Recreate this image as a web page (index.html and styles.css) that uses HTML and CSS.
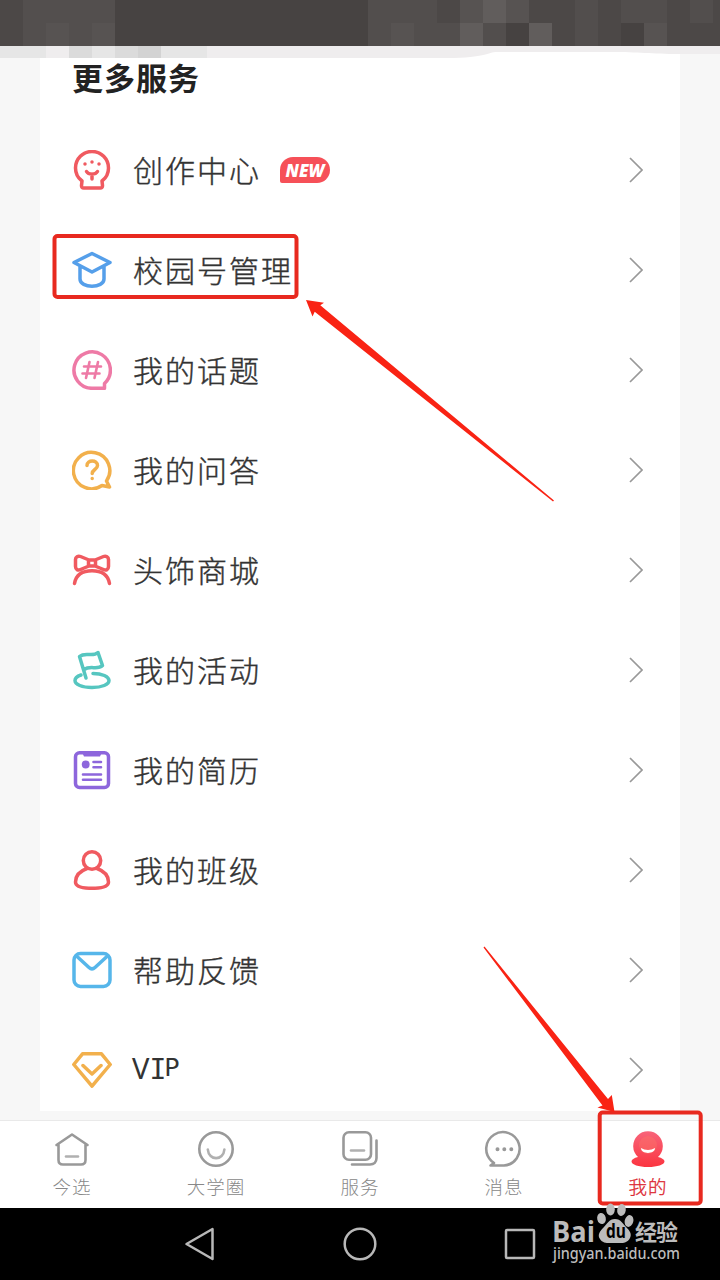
FILE: index.html
```
<!DOCTYPE html>
<html lang="zh-CN">
<head>
    <meta charset="UTF-8">
    <meta name="viewport" content="width=device-width, initial-scale=1.0">
    <title>我的</title>
    <link rel="stylesheet" href="styles.css">
</head>
<body>
    <div class="screen">
        <svg class="mosaic" viewBox="0 0 720 58">
            <path fill="#4c4847" d="M0 0h720v46H0z"/>
            <path fill="#534f4e" d="M23 0h92v46H23z"/>
            <path fill="#575352" d="M46 23h23v23H46zM92 23h23v23H92z"/>
            <path fill="#474342" d="M115 0h253v46H115z"/>
            <path fill="#524e4d" d="M368 0h69v23h-69zM368 23h92v23h-92zM483 23h23v23h-23zM575 0h23v46h-23zM621 0h46v23h-46zM690 0h23v23h-23z"/>
            <path fill="#575352" d="M391 23h23v23h-23zM460 0h23v23h-23zM506 0h23v23h-23zM644 23h23v23h-23z"/>
            <path fill="#615d5c" d="M483 0h23v23h-23zM460 23h23v23h-23zM529 23h23v23h-23z"/>
            <path fill="#464241" d="M506 23h23v23h-23zM621 23h23v23h-23z"/>
            <path fill="#fff" d="M40 46h640v12H40z"/>
            <path fill="#efedee" d="M0 46h720v8h-40c-30 0-40-2-70-2H497c-10 0-10 6-50 6H0z"/>
            <path fill="#e6e6e6" d="M0 46h46v12H0zM92 46h23v12H92zM161 46h46v12h-46z"/>
            <path fill="#dbdbdb" d="M69 46h23v12H69zM115 46h23v12h-23z"/>
            <path fill="#d3d3d3" d="M138 46h23v12h-23z"/>
        </svg>

        <div class="card">
            <h1>更多服务</h1>
            <div class="row red">
                <svg class="icon" viewBox="0 0 40 40"><path d="M10 31C6 28 3.500 23.500 3.500 18a16.500 16.500 0 0 1 33 0c0 5.500-2.500 10-6.500 13l.5 4.500c.1 1.500-.7 2.500-2.200 2.500H11.700c-1.500 0-2.300-1-2.200-2.500z"/><path d="M14.500 21.500c2 3.500 9 3.500 11 0M20 24v5"/><path d="M13 14v.1M20 12v.1M27 14v.1"/></svg>
                <span class="label">创作中心</span>
                <span class="badge">NEW</span>
                <svg class="arrow" viewBox="0 0 14 26"><path d="M1 1l12 12L1 25"/></svg>
            </div>
            <div class="row blue">
                <svg class="icon" viewBox="0 0 40 40"><path d="M2 12.500L20 3.500l18 9-18 9.500zM8 16v13c0 9.500 24 9.500 24 0V16"/></svg>
                <span class="label">校园号管理</span>
                <svg class="arrow" viewBox="0 0 14 26"><path d="M1 1l12 12L1 25"/></svg>
            </div>
            <div class="row pink">
                <svg class="icon" viewBox="0 0 40 40"><path d="M32.500 34v4.300H20A18.200 18.200 0 1 1 32.500 33.500z"/><path class="thin" d="M17.500 12l-3.500 16M26 12l-3.500 16M12 16.500h17M10.500 23.500h17"/></svg>
                <span class="label">我的话题</span>
                <svg class="arrow" viewBox="0 0 14 26"><path d="M1 1l12 12L1 25"/></svg>
            </div>
            <div class="row orange">
                <svg class="icon" viewBox="0 0 40 40"><path d="M34.500 31l3 6-7.500-1.500A18.200 18.200 0 1 1 34.500 31z"/><path d="M15 15.500c0-6 10.500-6 10.500 0 0 4-5.300 4-5.300 8M20.200 28.500v.1"/></svg>
                <span class="label">我的问答</span>
                <svg class="arrow" viewBox="0 0 14 26"><path d="M1 1l12 12L1 25"/></svg>
            </div>
            <div class="row red">
                <svg class="icon" viewBox="0 0 40 40"><path d="M17 10L8.500 6.500C6 5.500 3.500 7 3.500 9.500v7c0 3 2.500 4.300 5 3L17 16M23 10l8.500-3.500c2.500-1 5 .5 5 3v7c0 3-2.500 4.300-5 3L23 16M16.500 10h7v6h-7zM2.500 33.500C4 25 10 20.800 20 20.800S36 25 37.500 33.500"/></svg>
                <span class="label">头饰商城</span>
                <svg class="arrow" viewBox="0 0 14 26"><path d="M1 1l12 12L1 25"/></svg>
            </div>
            <div class="row teal">
                <svg class="icon" viewBox="0 0 40 40"><path d="M14 28L7.500 6.500c6-5 13 1 18.500-4l4.500 13c-5 5-12-.5-18.500 4M21 23.500c9 0 16 3 16 7s-7 7-17 7-17-3-17-7c0-2.500 2-4.200 6-5.500"/></svg>
                <span class="label">我的活动</span>
                <svg class="arrow" viewBox="0 0 14 26"><path d="M1 1l12 12L1 25"/></svg>
            </div>
            <div class="row purple">
                <svg class="icon" viewBox="0 0 40 40"><rect x="3.500" y="2.700" width="33" height="34.800" rx="4"/><path class="fill" d="M10 2h20l-2 4.500H12z"/><circle class="fill" cx="13.700" cy="14.500" r="3.900"/><path class="thin" d="M21.500 12h7.500M21.500 17.300h7.500M11 24.500h18M11 29.800h18"/></svg>
                <span class="label">我的简历</span>
                <svg class="arrow" viewBox="0 0 14 26"><path d="M1 1l12 12L1 25"/></svg>
            </div>
            <div class="row red">
                <svg class="icon" viewBox="0 0 40 40"><circle cx="20" cy="10.500" r="8.700"/><path d="M15 18.500C8 21 3.500 26 3.500 32c0 4 5 6.300 16.500 6.300S36.500 36 36.500 32c0-6-4.500-11-11.500-13.500"/></svg>
                <span class="label">我的班级</span>
                <svg class="arrow" viewBox="0 0 14 26"><path d="M1 1l12 12L1 25"/></svg>
            </div>
            <div class="row sky">
                <svg class="icon" viewBox="0 0 40 40"><rect x="2" y="3.500" width="36" height="33" rx="6.500"/><path d="M4.500 6l12.500 11.500c2 1.800 4 1.800 6 0L35.500 6"/></svg>
                <span class="label">帮助反馈</span>
                <svg class="arrow" viewBox="0 0 14 26"><path d="M1 1l12 12L1 25"/></svg>
            </div>
            <div class="row orange">
                <svg class="icon" viewBox="0 0 40 40"><path d="M10.500 3.800h19l8.700 10.700L20 36.200 1.800 14.500zM11 15.500l9 8.500 9-8.500"/></svg>
                <span class="label vip">V<span class="vip-i">I</span><span class="vip-p">P</span></span>
                <svg class="arrow" viewBox="0 0 14 26"><path d="M1 1l12 12L1 25"/></svg>
            </div>
        </div>

        <div class="tabs">
            <div class="tab">
                <svg viewBox="0 0 40 40"><path d="M4.500 16L20 5.500 35.500 16M6.500 15.500V31c0 3 1.500 4.500 4.500 4.500h18c3 0 4.500-1.500 4.500-4.500V15.500"/><path class="light" d="M14 27.500h12"/></svg>
                <span>今选</span>
            </div>
            <div class="tab">
                <svg viewBox="0 0 40 40"><circle cx="20" cy="20" r="16.700"/><path class="light" d="M11.800 20.500c1 11.500 15.600 11.500 16.600 0"/></svg>
                <span>大学圈</span>
            </div>
            <div class="tab">
                <svg viewBox="0 0 40 40"><rect x="3.500" y="3.300" width="27.500" height="27.500" rx="5.500"/><path class="light" d="M11 21.500h13"/><path d="M36.500 11.500V29c0 4-2.500 6.500-6.500 6.500H12"/></svg>
                <span>服务</span>
            </div>
            <div class="tab">
                <svg viewBox="0 0 40 40"><path d="M7.500 32A16.700 16.700 0 1 1 20 36.500H6.500l3.500-2.500z"/><path class="light dots" d="M13.500 20.200v.1M20.300 20.200v.1M27.300 20.200v.1"/></svg>
                <span>消息</span>
            </div>
            <div class="tab active">
                <svg viewBox="0 0 40 40">
                    <defs><linearGradient id="mine" x1="0" y1="0" x2="0" y2="1"><stop offset="0" stop-color="#f8647a"/><stop offset="1" stop-color="#fb3540"/></linearGradient></defs>
                    <path fill="url(#mine)" d="M10 28a14.800 14.800 0 1 1 20 0c4 1 6.500 2.500 6.500 4.500 0 3-7 5.500-16.500 5.500s-16.500-2.500-16.500-5.500c0-2 2.500-3.500 6.500-4.500z"/>
                    <circle cx="20" cy="16" r="9" fill="#fb7068" opacity=".5"/>
                    <path fill="#fff" d="M13 19c4 2.500 10 2.500 14 0 0 6.500-14 6.500-14 0z"/>
                </svg>
                <span>我的</span>
            </div>
        </div>

        <div class="system-bar">
            <svg viewBox="0 0 40 40"><path d="M6.500 20L32.500 5v30z"/></svg>
            <svg viewBox="0 0 40 40"><circle cx="20" cy="20" r="15.300"/></svg>
            <svg viewBox="0 0 40 40"><rect x="6" y="6" width="28" height="28" rx="1"/></svg>
        </div>

        <svg class="marks" viewBox="0 0 720 1280">
            <rect x="54.500" y="236" width="242" height="61" rx="3"/>
            <rect x="599.700" y="1112.500" width="101" height="91" rx="3"/>
            <path d="M306 300l18 2.700-3.700 2.600L554 500.500l-1 1L314.700 311.700l-2.200 4.800z"/>
            <path d="M483.500 947.500l1-1L608 1099l3.800-4 2.700 17-17-4.500 5-2z"/>
        </svg>

        <svg class="watermark" viewBox="0 0 140 70">
            <text class="bai" x="2" y="42" textLength="43" lengthAdjust="spacingAndGlyphs">Bai</text>
            <ellipse cx="51.500" cy="18.500" rx="4.300" ry="5.500" transform="rotate(-12 51.500 18.500)"/>
            <ellipse cx="60.500" cy="9.500" rx="4.300" ry="6"/>
            <ellipse cx="71.500" cy="10" rx="4.300" ry="6" transform="rotate(8 71.500 10)"/>
            <ellipse cx="79" cy="21" rx="4.300" ry="6" transform="rotate(14 79 21)"/>
            <path d="M65 19c6 0 8 5 11 8 4 4 6 7 4 11-3 6-9 5-15 5s-12 1-15-4c-3-4 0-8 4-12 3-3 5-8 11-8z"/>
            <text class="du" x="56" y="38" textLength="20" lengthAdjust="spacingAndGlyphs">du</text>
            <text class="jy" x="85" y="40" textLength="43">经验</text>
            <text class="url" x="3" y="59" textLength="127" lengthAdjust="spacingAndGlyphs">jingyan.baidu.com</text>
        </svg>
    </div>
</body>
</html>
```
FILE: styles.css
```
body {
    margin: 0;
    background-color: #f7f7f7;
    font-family: 'Noto Sans CJK SC', sans-serif;
}

.screen {
    position: relative;
    display: flex;
    flex-direction: column;
    width: 720px;
    height: 1280px;
    overflow: hidden;
}

.mosaic {
    display: block;
    width: 720px;
    height: 58px;
}

.card {
    box-sizing: border-box;
    height: 1053px;
    margin: 0 40px 9px;
    padding: 0 32px;
    background-color: #fff;
}

h1 {
    height: 62px;
    margin: 0;
    color: #222;
    font-size: 31px;
    font-weight: 700;
    line-height: 38px;
    letter-spacing: 1px;
}

.row {
    display: flex;
    align-items: center;
    height: 100px;
}

.icon {
    width: 40px;
    height: 40px;
    margin-right: 21px;
    fill: none;
    stroke: currentColor;
    stroke-width: 3.5;
    stroke-linecap: round;
    stroke-linejoin: round;
}

.icon .thin {
    stroke-width: 2.6;
}

.icon .fill {
    fill: currentColor;
    stroke: none;
}

.red { color: #f05a60; }
.blue { color: #559fea; }
.pink { color: #ee7aa6; }
.orange { color: #f2b04c; }
.teal { color: #56c6c0; }
.purple { color: #8d66dc; }
.sky { color: #56b6ea; }

.label {
    padding-bottom: 3px;
    color: #333;
    font-size: 30px;
    font-weight: 300;
    line-height: 40px;
    letter-spacing: 2px;
    -webkit-text-stroke: 0.4px #333;
}

.vip {
    margin-left: -1px;
    font-family: 'Noto Sans', sans-serif;
    font-size: 29px;
    font-weight: 400;
    letter-spacing: 0;
    -webkit-text-stroke: 0;
}

.vip-i {
    font-family: 'DejaVu Sans Mono', monospace;
    font-size: 28px;
    margin-right: -2px;
}

.vip-p {
    font-family: 'DejaVu Sans', sans-serif;
    font-size: 25px;
    vertical-align: 3px;
}

.badge {
    width: 50px;
    height: 26px;
    margin-left: 19px;
    border-radius: 13px 13px 13px 2px;
    background-color: #f65058;
    color: #fff;
    font-family: 'Open Sans', sans-serif;
    font-size: 17px;
    font-style: italic;
    font-weight: 800;
    line-height: 27px;
    text-align: center;
}

.arrow {
    width: 14px;
    height: 26px;
    margin-left: auto;
    margin-right: 5px;
    fill: none;
    stroke: #999;
    stroke-width: 1.7;
}

.tabs {
    box-sizing: border-box;
    display: flex;
    height: 88px;
    border-top: 1px solid #e9e9e9;
    background-color: #fff;
}

.tab {
    display: flex;
    flex: 1;
    flex-direction: column;
    align-items: center;
    padding-top: 8px;
    color: #888;
    font-size: 18.5px;
    font-weight: 300;
    line-height: 34px;
    letter-spacing: 1px;
}

.tab svg {
    width: 40px;
    height: 40px;
    fill: none;
    stroke: #999;
    stroke-width: 2.6;
    stroke-linecap: round;
    stroke-linejoin: round;
}

.tab .light {
    stroke: #b0b0b0;
}

.tab .dots {
    stroke: #999;
    stroke-width: 4;
}

.tab.active {
    color: #dc2832;
    -webkit-text-stroke: 0.3px #dc2832;
}

.tab.active svg {
    stroke: none;
}

.system-bar {
    display: flex;
    align-items: center;
    justify-content: center;
    gap: 120px;
    height: 72px;
    background-color: #000;
}

.system-bar svg {
    width: 40px;
    height: 40px;
    fill: none;
    stroke: #b8b8b8;
    stroke-width: 2.5;
    stroke-linejoin: round;
}

.marks {
    position: absolute;
    top: 0;
    left: 0;
    width: 720px;
    height: 1280px;
    fill: #f92314;
}

.marks rect {
    fill: none;
    stroke: #e8291f;
    stroke-width: 4;
}

.watermark {
    position: absolute;
    top: 1200px;
    left: 550px;
    width: 140px;
    height: 70px;
    fill: #bcbcbc;
}

.bai,
.du {
    font-family: 'Open Sans', sans-serif;
    font-size: 29px;
    font-weight: 700;
}

.du {
    fill: #000;
    font-size: 19px;
}

.jy {
    font-size: 22px;
    font-weight: 700;
}

.url {
    font-family: 'Noto Sans', sans-serif;
    font-size: 17px;
    font-weight: 500;
}
```
